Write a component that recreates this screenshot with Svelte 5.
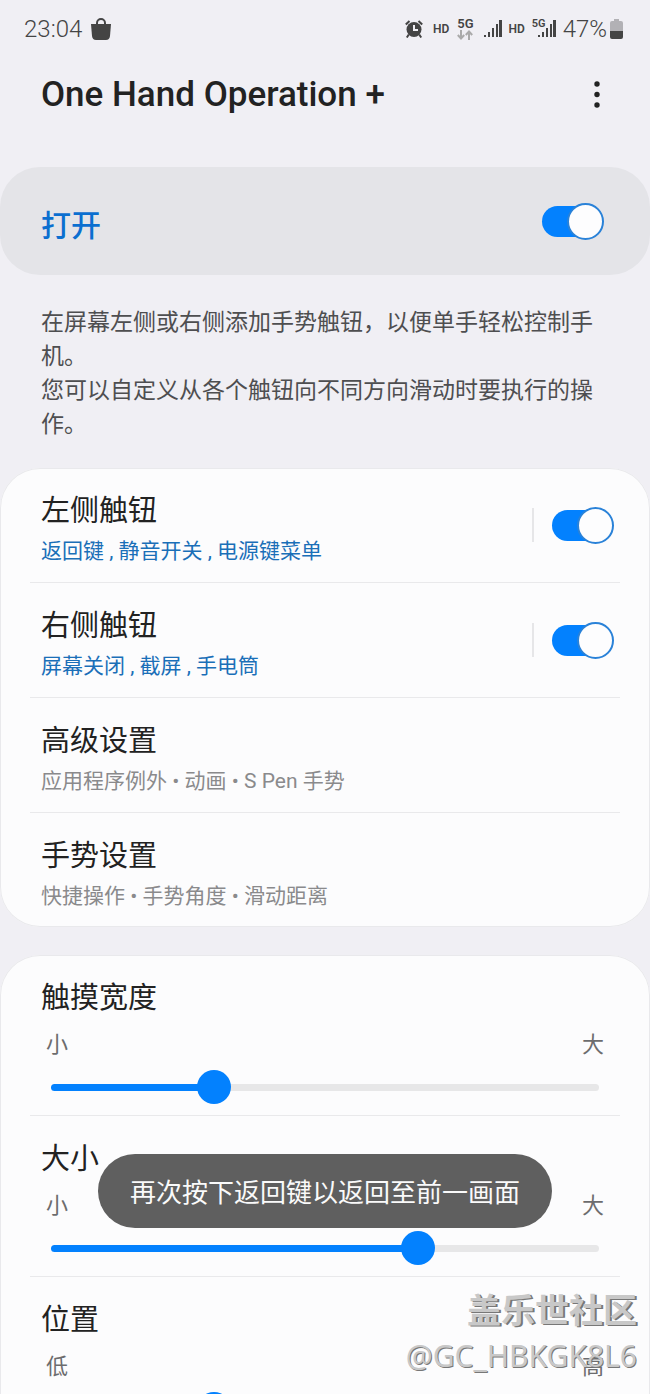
<script>
  let enabled = $state(true);

  let handles = $state([
    { id: 'left', title: '左侧触钮', summary: '返回键 , 静音开关 , 电源键菜单', on: true },
    { id: 'right', title: '右侧触钮', summary: '屏幕关闭 , 截屏 , 手电筒', on: true },
  ]);

  const links = [
    { id: 'advanced', title: '高级设置', summary: '应用程序例外 • 动画 • S Pen 手势' },
    { id: 'gesture', title: '手势设置', summary: '快捷操作 • 手势角度 • 滑动距离' },
  ];

  let sliders = $state([
    { id: 'width', title: '触摸宽度', min: '小', max: '大', value: 28.5 },
    { id: 'size', title: '大小', min: '小', max: '大', value: 68 },
    { id: 'position', title: '位置', min: '低', max: '高', value: 28.5 },
  ]);

  const toast = '再次按下返回键以返回至前一画面';
</script>

{#snippet signal()}
  <svg class="signal" width="18" height="18" viewBox="0 0 18 18" fill="#444" aria-hidden="true">
    <rect x="0" y="15" width="2" height="2" />
    <rect x="4" y="12" width="2" height="5" />
    <rect x="8" y="8" width="2" height="9" />
    <rect x="12" y="4" width="2" height="13" />
    <rect x="15" y="0" width="3" height="17" />
  </svg>
{/snippet}

<div class="screen">
  <div class="status-bar">
    <span class="clock">23:04</span>
    <svg width="20" height="22" viewBox="0 0 20 22" aria-hidden="true">
      <path d="M6 7V5a4 4 0 0 1 8 0v2" fill="none" stroke="#444" stroke-width="2" />
      <path d="M0 6h20l-1 12q-.5 4-4 4H5q-3.500 0-4-4z" fill="#444" />
    </svg>

    <div class="status-icons">
      <svg class="alarm" width="18" height="18" viewBox="0 0 18 18" aria-hidden="true">
        <circle cx="9" cy="9.500" r="7.500" fill="#444" />
        <path d="M.8 4.500 4.500 1M17.200 4.500 13.500 1M3.800 14.500l-2 3M14.200 14.500l2 3" stroke="#444" stroke-width="2" fill="none" />
        <path d="M9 5v5h4" stroke="#f0eff4" stroke-width="2" fill="none" />
      </svg>
      <span class="hd">HD</span>
      <span class="network">
        5G
        <svg width="16" height="10" viewBox="0 0 16 10" fill="none" stroke="#aaa" stroke-width="2" aria-hidden="true">
          <path d="M4 0v8M.8 5 4 8.500 7.200 5M12 10V2M8.800 5 12 1.500 15.200 5" />
        </svg>
      </span>
      {@render signal()}
      <span class="hd">HD</span>
      <span class="network-signal">
        <span>5G</span>
        {@render signal()}
      </span>
      <span class="percent">47%</span>
      <svg width="13" height="20" viewBox="0 0 13 20" aria-hidden="true">
        <path d="M4 0h5v2h2q2 0 2 2v8H0V4q0-2 2-2h2z" fill="#b2b1b5" />
        <path d="M0 12h13v6q0 2-2 2H2q-2 0-2-2z" fill="#444" />
      </svg>
    </div>
  </div>

  <header>
    <h1>One Hand Operation +</h1>
    <button class="more" type="button" aria-label="更多选项">
      <svg width="6" height="27" viewBox="0 0 6 27" fill="#222" aria-hidden="true">
        <circle cx="3" cy="3" r="2.700" />
        <circle cx="3" cy="13.500" r="2.700" />
        <circle cx="3" cy="24" r="2.700" />
      </svg>
    </button>
  </header>

  <label class="master">
    <span>打开</span>
    <input class="toggle" type="checkbox" role="switch" bind:checked={enabled} />
  </label>

  <p class="description">
    在屏幕左侧或右侧添加手势触钮，以便单手轻松控制手机。<br />
    您可以自定义从各个触钮向不同方向滑动时要执行的操作。
  </p>

  <section class="card">
    {#each handles as handle (handle.id)}
      <div class="row">
        <a class="text" href="#{handle.id}">
          <span class="title" id="{handle.id}-title">{handle.title}</span>
          <span class="summary active">{handle.summary}</span>
        </a>
        <span class="separator"></span>
        <input
          class="toggle"
          type="checkbox"
          role="switch"
          aria-labelledby="{handle.id}-title"
          bind:checked={handle.on}
        />
      </div>
    {/each}
    {#each links as link (link.id)}
      <div class="row">
        <a class="text" href="#{link.id}">
          <span class="title">{link.title}</span>
          <span class="summary">{link.summary}</span>
        </a>
      </div>
    {/each}
  </section>

  <section class="card">
    {#each sliders as slider (slider.id)}
      <div class="slider-row">
        <label class="title" for={slider.id}>{slider.title}</label>
        <div class="range-labels">
          <span>{slider.min}</span>
          <span>{slider.max}</span>
        </div>
        <input
          id={slider.id}
          type="range"
          min="0"
          max="100"
          step="0.5"
          bind:value={slider.value}
          style="--fill: {slider.value}%"
        />
      </div>
    {/each}
  </section>

  <div class="toast" role="status">{toast}</div>

  <div class="watermark">
    <strong>盖乐世社区</strong>
    <span>@GC_HBKGK8L6</span>
  </div>
</div>

<style>
  :global(body) {
    background: #f0eff4;
  }

  .screen {
    position: relative;
    height: 100vh;
    overflow: hidden;
    background: #f0eff4;
    color: #222;
    font-family: Roboto, 'Noto Sans CJK SC', sans-serif;
  }

  .status-bar {
    display: flex;
    align-items: center;
    gap: 9px;
    height: 58px;
    padding: 0 27px 0 24px;
    color: #444;
  }

  .clock, .percent {
    font-size: 24px;
    font-weight: 300;
  }

  .status-icons {
    display: flex;
    align-items: center;
    gap: 7px;
    margin-left: auto;
  }

  .alarm {
    margin-right: 3px;
  }

  .hd {
    font-size: 12px;
    font-weight: 600;
  }

  .network {
    display: flex;
    flex-direction: column;
    align-items: center;
    margin: 0 3px 0 1px;
    font-size: 13px;
    font-weight: 600;
    line-height: 12px;
  }

  .network-signal {
    display: flex;
  }

  .network-signal span {
    font-size: 11px;
    font-weight: 600;
    line-height: 8px;
    margin-right: -8px;
  }

  .percent {
    margin-right: -4px;
  }

  header {
    display: flex;
    align-items: center;
    justify-content: space-between;
    height: 72px;
    padding: 0 41px;
    margin-bottom: 37px;
  }

  h1 {
    margin: 0;
    font-size: 35px;
    font-weight: 500;
  }

  .more {
    display: flex;
    padding: 9px;
    border: none;
    background: none;
    cursor: pointer;
  }

  .master {
    display: flex;
    align-items: center;
    justify-content: space-between;
    height: 108px;
    padding: 0 46px 0 41px;
    border-radius: 40px;
    background: #e4e4e8;
    color: #0b6fd0;
    font-size: 30px;
    font-weight: 500;
    cursor: pointer;
  }

  .master span {
    padding-top: 3px;
  }

  .toggle {
    position: relative;
    flex: none;
    display: flex;
    align-items: center;
    appearance: none;
    width: 62px;
    height: 37px;
    margin: 0;
    cursor: pointer;
  }

  .toggle::before {
    content: '';
    width: 56px;
    height: 31px;
    border-radius: 16px;
    background: #c4c4c8;
  }

  .toggle::after {
    content: '';
    position: absolute;
    left: 0;
    box-sizing: border-box;
    width: 37px;
    height: 37px;
    border: 2px solid #999;
    border-radius: 50%;
    background: #fdfdfe;
  }

  .toggle:checked::before {
    background: #0381fe;
  }

  .toggle:checked::after {
    left: auto;
    right: 0;
    border-color: #2a82d8;
  }

  .description {
    margin: 31px 41px 26px;
    color: #4e4e50;
    font-size: 23px;
    line-height: 34px;
  }

  .card {
    margin-bottom: 28px;
    border-radius: 40px;
    background: #fcfcfd;
    box-shadow: inset 0 0 0 1px #e9e9ec;
  }

  .row, .slider-row {
    margin: 0 30px;
    border-bottom: 1px solid #e9e9eb;
  }

  .row:last-child, .slider-row:last-child {
    border-bottom: none;
  }

  .row {
    display: flex;
    align-items: center;
    padding: 0 6px 0 11px;
  }

  .text {
    flex: 1;
    display: flex;
    flex-direction: column;
    gap: 5px;
    padding: 23px 0 16px;
    color: inherit;
    text-decoration: none;
  }

  .title {
    font-size: 29px;
    line-height: 40px;
  }

  .summary {
    color: #8a8a8c;
    font-size: 21px;
    line-height: 30px;
  }

  .summary.active {
    color: #1a6fb8;
  }

  .separator {
    width: 2px;
    height: 34px;
    margin-right: 18px;
    background: #e6e6e8;
  }

  .slider-row {
    display: flex;
    flex-direction: column;
    padding: 23px 11px 11px;
  }

  .range-labels {
    display: flex;
    justify-content: space-between;
    margin: 12px 5px 10px;
    color: #6c6c6e;
    font-size: 22px;
    line-height: 30px;
  }

  input[type='range'] {
    appearance: none;
    height: 34px;
    margin: 0 10px;
    background: none;
    cursor: pointer;
  }

  input[type='range']::-webkit-slider-runnable-track {
    height: 7px;
    border-radius: 4px;
    background: linear-gradient(to right, #0381fe var(--fill), #e7e7e8 var(--fill));
  }

  input[type='range']::-webkit-slider-thumb {
    appearance: none;
    width: 34px;
    height: 34px;
    margin-top: -14px;
    border-radius: 50%;
    background: #0381fe;
  }

  .toast {
    position: absolute;
    bottom: 166px;
    left: 50%;
    transform: translateX(-50%);
    padding: 19px 32px 15px;
    border-radius: 37px;
    background: #5f5f5f;
    color: #fafafa;
    font-size: 26px;
    line-height: 40px;
    white-space: nowrap;
  }

  .watermark {
    position: absolute;
    right: 13px;
    bottom: 16px;
    display: flex;
    flex-direction: column;
    align-items: flex-end;
    color: #c8c8c8;
    font-family: 'Noto Sans', 'Noto Sans CJK SC', sans-serif;
    font-size: 30px;
    line-height: 45px;
    text-shadow: 1px 1px #777;
    pointer-events: none;
  }

  .watermark strong {
    font-size: 34px;
    text-shadow: 2px 1px #777;
  }
</style>
